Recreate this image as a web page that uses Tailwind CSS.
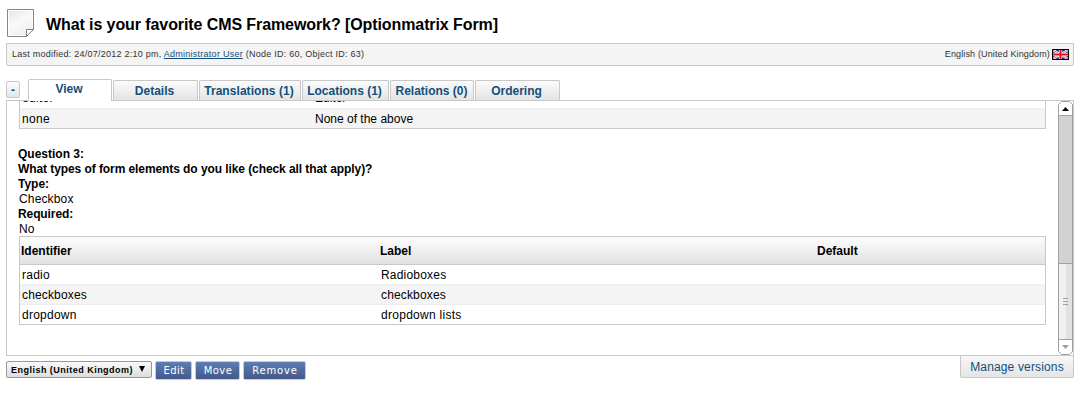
<!DOCTYPE html>
<html lang="en">
<head>
<meta charset="utf-8">
<title>Optionmatrix Form</title>
<script src="https://cdn.jsdelivr.net/npm/@tailwindcss/browser@4"></script>
</head>
<body class="h-[406px] w-[1083px] overflow-hidden bg-white font-['Liberation_Sans',Arial,sans-serif] text-xs text-black">
<div class="flex w-[1068px] flex-col ml-1.5 whitespace-nowrap">
  <header class="flex h-[43px] pt-[9px]">
    <svg class="ml-px h-7 w-[27px] shrink-0" viewBox="0 0 27 28" fill="none">
      <defs><linearGradient id="p" x1="0" y1="0" x2="0.5" y2="1"><stop stop-color="#e2e2e2"/><stop offset=".55" stop-color="#fafafa"/><stop offset="1" stop-color="#eee"/></linearGradient></defs>
      <path d="M.5.5h26v20l-7 7H.5z" fill="url(#p)" stroke="#888"/>
      <path d="M1.500 1.500h24v18M1.500 1.500v25h17" stroke="#fff"/>
      <path d="M26.500 20.500H19.500V27.500z" fill="#fff" stroke="#808080"/>
    </svg>
    <h1 class="ml-3 pt-[7px] text-base leading-[18px] font-bold tracking-[-0.09px]">What is your favorite CMS Framework? [Optionmatrix Form]</h1>
  </header>

  <div class="flex h-[23px] items-center justify-between rounded-b-xs border border-[#c8c8c8] bg-[#f4f4f4] pr-1 pl-[5px] text-[9px] text-[#333]">
    <p class="pb-0.5 tracking-[0.25px]">Last modified: 24/07/2012 2:10 pm, <a class="text-[#134f7b] underline">Administrator User</a> (Node ID: 60, Object ID: 63)</p>
    <div class="flex items-center gap-0.5"><span class="pb-0.5 tracking-[0.13px]">English (United Kingdom)</span>
      <svg class="h-[11px] w-[17px]" viewBox="0 0 17 11"><path fill="#1b2a80" d="M0 0h17v11H0z"/><path d="M1 1l15 9M16 1L1 10" stroke="#fff" stroke-width="2.200"/><path d="M1 1l15 9M16 1L1 10" stroke="#d33" stroke-width=".8"/><path d="M8.500 0v11M0 5.500h17" stroke="#fff" stroke-width="3.400"/><path d="M8.500 0v11M0 5.500h17" stroke="#e01020" stroke-width="2"/><path d="M.5.5h16v10H.5z" fill="none" stroke="#000"/></svg>
    </div>
  </div>

  <nav class="relative z-10 mt-[13px] -mb-px flex h-[22px] items-end text-xs font-bold text-[#134f7b]">
    <a class="mr-2 mb-[3px] flex h-[17px] w-3.5 items-center justify-center self-end rounded-xs border border-[#c8c8c8] bg-linear-to-b from-white to-[#e4e4e4]">-</a>
    <a class="mr-px flex h-[22px] w-[84px] justify-center rounded-t-xs border border-b-0 border-[#c8c8c8] bg-white pt-px pr-0.5 leading-4">View</a>
    <a class="mr-px mb-px flex h-5 w-[85px] justify-center rounded-t-xs border border-b-0 border-[#c8c8c8] bg-linear-to-b from-[#fbfbfb] to-[#e4e4e4] pt-0.5 pr-0.5 leading-4">Details</a>
    <a class="mr-px mb-px flex h-5 w-[102px] justify-center rounded-t-xs border border-b-0 border-[#c8c8c8] bg-linear-to-b from-[#fbfbfb] to-[#e4e4e4] pt-0.5 pr-0.5 leading-4 tracking-[0.06px]">Translations (1)</a>
    <a class="mr-px mb-px flex h-5 w-[87px] justify-center rounded-t-xs border border-b-0 border-[#c8c8c8] bg-linear-to-b from-[#fbfbfb] to-[#e4e4e4] pt-0.5 pr-0.5 leading-4">Locations (1)</a>
    <a class="mr-px mb-px flex h-5 w-[84px] justify-center rounded-t-xs border border-b-0 border-[#c8c8c8] bg-linear-to-b from-[#fbfbfb] to-[#e4e4e4] pt-0.5 pr-px leading-4">Relations (0)</a>
    <a class="mb-px flex h-5 w-[85px] justify-center rounded-t-xs border border-b-0 border-[#c8c8c8] bg-linear-to-b from-[#fbfbfb] to-[#e4e4e4] pt-0.5 pr-0.5 leading-4">Ordering</a>
  </nav>

  <main class="flex h-64 justify-between border border-[#c8c8c8] pl-[11px]">
    <div class="h-[254px] w-[1028px] overflow-hidden pl-px">
      <section class="-mt-[13px] h-[41px] border-x border-b border-[#c8c8c8] leading-5">
        <div class="flex h-5"><span class="w-[293px] pl-0.5 tracking-[0.3px]">editor</span><span class="pl-0.5">Editor</span></div>
        <div class="flex h-5 border-t border-[#eee] bg-[#f4f4f4]"><span class="w-[293px] pl-0.5 tracking-[0.3px]">none</span><span class="pl-0.5">None of the above</span></div>
      </section>
      <dl class="-ml-px mt-[18px] leading-[15px]">
        <dt class="font-bold">Question 3:</dt>
        <dt class="font-bold tracking-[-0.08px]">What types of form elements do you like (check all that apply)?</dt>
        <dt class="font-bold">Type:</dt><dd class="pl-px tracking-[0.15px]">Checkbox</dd>
        <dt class="font-bold tracking-[-0.1px]">Required:</dt><dd class="pl-px">No</dd>
      </dl>
      <section class="-mt-px h-[89px] border border-[#c8c8c8] leading-5">
        <div class="flex h-7 items-center border-b border-[#c8c8c8] bg-linear-to-b from-[#fdfdfd] to-[#e2e2e2] font-bold"><span class="w-[359px] pl-px">Identifier</span><span class="w-[437px] pl-px">Label</span><span class="pl-px">Default</span></div>
        <div class="flex h-[19px]"><span class="w-[359px] pl-0.5 tracking-[0.25px]">radio</span><span class="pl-0.5 tracking-[0.2px]">Radioboxes</span></div>
        <div class="flex h-5 border-t border-[#eee] bg-[#f4f4f4]"><span class="w-[359px] pl-0.5 tracking-[0.15px]">checkboxes</span><span class="pl-0.5 tracking-[0.15px]">checkboxes</span></div>
        <div class="flex h-5 border-t border-[#eee]"><span class="w-[359px] pl-0.5 tracking-[0.25px]">dropdown</span><span class="pl-0.5 tracking-[0.28px]">dropdown lists</span></div>
      </section>
    </div>
    <svg class="h-[254px] w-[15px]" viewBox="0 0 15 254" fill="none">
      <path d="M.5 3.500l3-3h8l3 3v247l-3 3h-8l-3-3z" fill="#fff" stroke="#a0a0a0"/>
      <path d="M1 15h13v147H1z" fill="#d2d2d2"/><path d="M1 163h7v75H1z" fill="#f0f0f0"/><path d="M8 163h6v75H8z" fill="#e2e2e2"/>
      <path d="M0 14.500h15M0 162.500h15M0 238.500h15M5 197.500h5M5 200.500h5M5 203.500h5" stroke="#a0a0a0"/>
      <path d="M4 10l3.500-4 3.500 4z" fill="#000"/><path d="M4 244h7l-3.500 4z" fill="#a0a0a0"/>
    </svg>
  </main>

  <footer class="flex justify-between">
    <div class="flex items-start gap-[3px] pt-[5px] font-['DejaVu_Sans',sans-serif] text-[10px] text-white">
      <button class="flex h-[17px] w-[146px] items-center justify-between rounded-xs border border-[#999] bg-linear-to-b from-[#fafafa] to-[#ddd] pr-[6px] pl-1 font-['Liberation_Sans',Arial,sans-serif] text-[9px] font-bold text-black"><span class="tracking-[0.48px]">English (United Kingdom)</span>
        <svg class="h-1.5 w-1.5 -translate-y-px" viewBox="0 0 6 6"><path d="M0 0h6L3 6z"/></svg></button>
      <button class="flex h-[19px] w-[37px] items-center justify-center rounded-xs border border-[#c3cbdc] bg-linear-to-b from-[#5c7db4] to-[#44598a] pl-px tracking-[0.4px]">Edit</button>
      <button class="flex h-[19px] w-[45px] items-center justify-center rounded-xs border border-[#c3cbdc] bg-linear-to-b from-[#5c7db4] to-[#44598a] pl-px tracking-[0.4px]">Move</button>
      <button class="flex h-[19px] w-[63px] items-center justify-center rounded-xs border border-[#c3cbdc] bg-linear-to-b from-[#5c7db4] to-[#44598a] pl-px tracking-[0.8px]">Remove</button>
    </div>
    <a class="flex h-[22px] w-[114px] items-center justify-center rounded-b-xs border border-t-0 border-[#c8c8c8] bg-linear-to-b from-[#f8f8f8] to-[#e4e4e4] tracking-[0.15px] text-[#134f7b]">Manage versions</a>
  </footer>
</div>
</body>
</html>
